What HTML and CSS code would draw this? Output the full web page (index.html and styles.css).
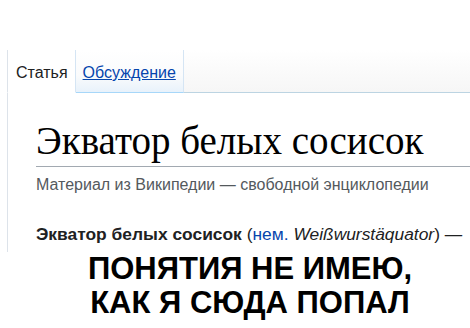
FILE: index.html
```html
<!DOCTYPE html>
<html lang="ru">
<head>
<meta charset="utf-8">
<link rel="stylesheet" href="styles.css">
</head>
<body>
<div class="page">
  <div class="tabs">
    <div class="gap"></div>
    <div class="tab selected"><span>Статья</span></div>
    <div class="tab"><a href="#">Обсуждение</a></div>
    <div class="fill"></div>
  </div>
  <div class="content">
    <h1 class="title">Экватор белых сосисок</h1>
    <div class="tagline">Материал из Википедии — свободной энциклопедии</div>
    <p class="lead"><b>Экватор белых сосисок</b> (<a href="#">нем.</a> <i>Weißwurstäquator</i>) —</p>
  </div>
  <div class="caption">ПОНЯТИЯ НЕ ИМЕЮ,<br>КАК Я СЮДА ПОПАЛ</div>
</div>
</body>
</html>
```

FILE: styles.css
```css
html, body {
  margin: 0;
  padding: 0;
  background: #fff;
}
.page {
  width: 470px;
  height: 328px;
  overflow: hidden;
  padding-top: 50px;
  box-sizing: border-box;
  font-family: "Liberation Sans", Arial, sans-serif;
  color: #202122;
}
.tabs {
  display: flex;
  height: 43px;
  box-sizing: border-box;
}
.gap {
  width: 7px;
  flex: none;
}
.tab {
  display: flex;
  align-items: flex-end;
  padding: 0 7px 10px 7px;
  font-size: 16px;
  background: linear-gradient(#ffffff, #fafbfc 60%, #e8f2fb);
  border-right: 1px solid #d5e5f4;
  border-bottom: 1px solid #a7d7f9;
}
.tab.selected {
  padding-left: 8px;
  background: #fff;
  border-left: 1px solid #dde3ea;
  border-right: 1px solid #d5e5f4;
  border-bottom: 1px solid #fff;
  color: #202122;
}
.tab a {
  color: #0645ad;
  text-decoration: underline;
}
.fill {
  flex: 1;
  background: linear-gradient(#ffffff, #f6f6f6);
  border-bottom: 1px solid #bcd4e2;
}
.content {
  margin-left: 7px;
  border-left: 1px solid #dde3ea;
  padding: 26px 0 8px 28px;
}
.title {
  margin: 0;
  font-family: "Liberation Serif", "Times New Roman", serif;
  font-weight: normal;
  font-size: 39px;
  line-height: 1.15;
  color: #000;
  border-bottom: 1px solid #a2a9b1;
  padding-bottom: 2px;
}
.tagline {
  margin-top: 9px;
  font-size: 16px;
  color: #54595d;
}
.lead {
  margin: 30px 0 0 0;
  font-size: 17.4px;
  line-height: 20px;
  color: #202122;
}
.lead a {
  color: #0645ad;
  text-decoration: none;
}
.caption {
  padding-left: 30px;
  text-align: center;
  font-weight: bold;
  font-size: 31px;
  line-height: 34px;
  color: #000;
}
```
